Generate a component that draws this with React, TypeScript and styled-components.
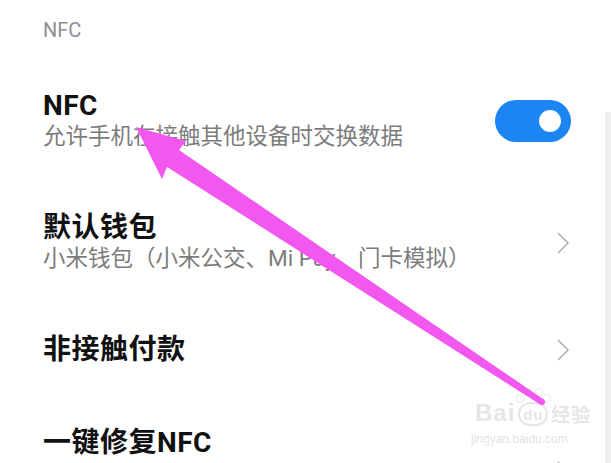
import React from "react";
import styled, { createGlobalStyle } from "styled-components";

const Global = createGlobalStyle`
  html, body { margin: 0; padding: 0; background: #ffffff; overflow: hidden; }
  body { font-family: "Roboto", "Noto Sans CJK SC", sans-serif; }
  * { box-sizing: border-box; }
`;

const Page = styled.div`
  position: relative;
  width: 611px;
  height: 463px;
  overflow: hidden;
  display: flex;
  background: #ffffff;
`;

const Content = styled.div`
  flex: 1;
  display: flex;
  flex-direction: column;
  padding: 18px 34px 0 43px;
`;

const Strip = styled.div`
  width: 6px;
  margin-top: 112px;
  background: #efefef;
`;

const SectionHeader = styled.div`
  font-family: "Roboto", "Noto Sans CJK SC", sans-serif;
  font-size: 20px;
  line-height: 24px;
  color: #8d8d95;
  margin-bottom: 17px;
`;

const Row = styled.div<{ $minH?: number }>`
  display: flex;
  align-items: center;
  justify-content: space-between;
  padding: 31px 0 30px;
  min-height: ${(p) => (p.$minH ? `${p.$minH}px` : "auto")};
`;

const Texts = styled.div`
  display: flex;
  flex-direction: column;
  align-self: flex-start;
`;

const Title = styled.div`
  font-family: "Roboto", "Noto Sans CJK SC", sans-serif;
  font-size: 28px;
  font-weight: 700;
  line-height: 32px;
  color: #111111;
  letter-spacing: 0.5px;
`;

const Subtitle = styled.div`
  font-family: "Roboto", "Noto Sans CJK SC", sans-serif;
  font-size: 22.5px;
  line-height: 30px;
  color: #7c7c7c;
  margin-top: -1px;
`;

const Toggle = styled.div<{ $on: boolean }>`
  width: 76px;
  height: 42px;
  border-radius: 21px;
  background: ${(p) => (p.$on ? "#1b86f3" : "#d9d9d9")};
  display: flex;
  align-items: center;
  justify-content: ${(p) => (p.$on ? "flex-end" : "flex-start")};
  padding: 0 10px;
  flex-shrink: 0;
`;

const Knob = styled.div`
  width: 22px;
  height: 22px;
  border-radius: 50%;
  background: #ffffff;
`;

const ChevronBox = styled.div`
  width: 13px;
  height: 22px;
  margin-right: 1px;
  flex-shrink: 0;
  display: flex;
`;

const Overlay = styled.svg`
  position: absolute;
  left: 0;
  top: 0;
  width: 611px;
  height: 463px;
  pointer-events: none;
`;

const Watermark = styled.div`
  position: absolute;
  left: 475px;
  top: 398px;
  display: flex;
  flex-direction: column;
  align-items: flex-start;
  color: #e6e6e6;
  pointer-events: none;
`;

const MarkTop = styled.div`
  display: flex;
  align-items: flex-end;
  font-family: "Liberation Sans", sans-serif;
  font-size: 24px;
  line-height: 30px;
  font-weight: 700;
  letter-spacing: 1px;
`;

const MarkDu = styled.span`
  position: relative;
  display: inline-flex;
  align-items: center;
  justify-content: center;
  width: 30px;
  height: 24px;
  border: 2px solid #e6e6e6;
  border-radius: 13px;
  font-size: 15px;
  line-height: 1;
  margin: 0 3px 2px;
`;

const Toe = styled.span<{ $x: number; $y: number }>`
  position: absolute;
  left: ${(p) => p.$x}px;
  top: ${(p) => p.$y}px;
  width: 8px;
  height: 9px;
  border: 1.5px solid #e6e6e6;
  border-radius: 50%;
`;

const MarkCn = styled.span`
  font-family: "Noto Sans CJK SC", sans-serif;
  font-size: 19px;
  font-weight: 700;
  line-height: 28px;
`;

const MarkUrl = styled.div`
  font-family: "Liberation Sans", sans-serif;
  font-size: 12px;
  line-height: 16px;
  margin-top: 3px;
  margin-left: -4px;
  color: #e3e3e3;
`;

const Chevron = () => (
  <ChevronBox>
    <svg width="13" height="22" viewBox="0 0 13 22">
      <polyline
        points="1.5,1.5 11,11 1.5,20.5"
        fill="none"
        stroke="#b3b3b3"
        strokeWidth="1.7"
        strokeLinecap="round"
        strokeLinejoin="round"
      />
    </svg>
  </ChevronBox>
);

export default function App() {
  return (
    <>
      <Global />
      <Page>
        <Content>
          <SectionHeader>NFC</SectionHeader>
          <Row>
            <Texts>
              <Title>NFC</Title>
              <Subtitle>允许手机在接触其他设备时交换数据</Subtitle>
            </Texts>
            <Toggle $on>
              <Knob />
            </Toggle>
          </Row>
          <Row>
            <Texts>
              <Title>默认钱包</Title>
              <Subtitle>小米钱包（小米公交、Mi Pay、门卡模拟）</Subtitle>
            </Texts>
            <Chevron />
          </Row>
          <Row>
            <Texts>
              <Title>非接触付款</Title>
            </Texts>
            <Chevron />
          </Row>
          <Row $minH={150}>
            <Texts>
              <Title>一键修复NFC</Title>
            </Texts>
            <Chevron />
          </Row>
        </Content>
        <Strip />
        <Watermark>
          <MarkTop>
            Bai
            <MarkDu>
              <Toe $x={-4} $y={-10} />
              <Toe $x={5} $y={-16} />
              <Toe $x={15} $y={-16} />
              <Toe $x={23} $y={-10} />
              du
            </MarkDu>
            <MarkCn>经验</MarkCn>
          </MarkTop>
          <MarkUrl>jingyan.baidu.com</MarkUrl>
        </Watermark>
        <Overlay viewBox="0 0 611 463">
          <polygon
            points="136,127 186,141 179,150 543.7,399.5 540.3,404.5 167,167 162,179"
            fill="#f257f0"
          />
          <circle cx="542" cy="402" r="3" fill="#f257f0" />
        </Overlay>
      </Page>
    </>
  );
}
